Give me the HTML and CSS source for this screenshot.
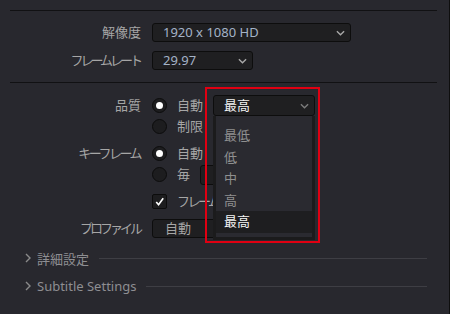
FILE: index.html
```html
<!DOCTYPE html>
<html lang="ja">
<head>
<meta charset="utf-8">
<link rel="stylesheet" href="styles.css">
</head>
<body>
<div class="panel">
  <div class="sep first"></div>
  <div class="row r-res">
    <div class="label">解像度</div>
    <div class="select wide"><span class="val blue">1920 x 1080 HD</span><svg class="chev" viewBox="0 0 10 6"><path d="M1 1l4 4 4-4" fill="none" stroke="#a9a9a9" stroke-width="1.5"/></svg></div>
  </div>
  <div class="row r-fps">
    <div class="label"><span class="kana k7">フレームレート</span></div>
    <div class="select fps"><span class="val blue">29.97</span><svg class="chev" viewBox="0 0 10 6"><path d="M1 1l4 4 4-4" fill="none" stroke="#a9a9a9" stroke-width="1.5"/></svg></div>
  </div>
  <div class="sep second"></div>

  <div class="group g-quality">
    <div class="label">品質</div>
    <div class="opts">
      <div class="opt"><span class="radio on"></span><span class="otext">自動</span>
        <div class="qwrap">
          <div class="select qsel"><span class="val white">最高</span><svg class="chev" viewBox="0 0 10 6"><path d="M1 1l4 4 4-4" fill="none" stroke="#7c7c7c" stroke-width="1.5"/></svg></div>
          <ul class="menu">
            <li>最低</li>
            <li>低</li>
            <li>中</li>
            <li>高</li>
            <li class="sel">最高</li>
          </ul>
          <div class="redbox"></div>
        </div>
      </div>
      <div class="opt"><span class="radio"></span><span class="otext">制限</span></div>
    </div>
  </div>

  <div class="group g-key">
    <div class="label"><span class="kana">キーフレーム</span></div>
    <div class="opts">
      <div class="opt"><span class="radio on"></span><span class="otext">自動</span></div>
      <div class="opt"><span class="radio"></span><span class="otext">毎</span><span class="numbox"></span></div>
    </div>
  </div>

  <div class="row r-check">
    <div class="label"></div>
    <div class="opt"><span class="check"><svg viewBox="0 0 14 14"><path d="M3.5 7.5l2.5 3 5-7" fill="none" stroke="#fff" stroke-width="1.8"/></svg></span><span class="otext kana">フレームの並べ替え</span></div>
  </div>

  <div class="row r-prof">
    <div class="label"><span class="kana k-prof">プロファイル</span></div>
    <div class="select prof"><span class="val">自動</span></div>
  </div>

  <div class="section s-detail">
    <svg class="arrow" viewBox="0 0 6 10"><path d="M1 1l4 4-4 4" fill="none" stroke="#8a8a8a" stroke-width="1.4"/></svg>
    <span class="stitle">詳細設定</span>
    <span class="sline"></span>
  </div>
  <div class="section s-sub">
    <svg class="arrow" viewBox="0 0 6 10"><path d="M1 1l4 4-4 4" fill="none" stroke="#8a8a8a" stroke-width="1.4"/></svg>
    <span class="stitle">Subtitle Settings</span>
    <span class="sline"></span>
  </div>
</div>
</body>
</html>
```
FILE: styles.css
```css
* { box-sizing: border-box; }
html, body { margin: 0; padding: 0; }
body {
  width: 450px;
  height: 314px;
  overflow: hidden;
  background: #28282e;
  font-family: "Noto Sans", "Noto Sans CJK JP", sans-serif;
  font-size: 13px;
  color: #a3a3a3;
}
.panel {
  width: 450px;
  height: 314px;
  border-right: 1px solid #0e0e0e;
  padding-top: 10px;
}
.sep {
  height: 1px;
  background: #111113;
  margin-left: 10px;
  width: 427px;
}
.row {
  display: flex;
  align-items: center;
}
.label {
  width: 141px;
  text-align: right;
  margin-right: 11px;
  flex: none;
  line-height: 19px;
  color: #a6a6a6;
}
.kana { letter-spacing: -2.5px; }
.k7 { letter-spacing: -3px; }
.k-prof { letter-spacing: -3px; }
.label .kana { margin-right: 1px; }
.select {
  height: 19px;
  background: #1f1f21;
  border: 1px solid #0d0d0d;
  border-radius: 3px;
  display: flex;
  align-items: center;
  padding-left: 10px;
  position: relative;
}
.val { line-height: 17px; }
.blue { color: #a4b3c7; }
.white { color: #f2f2f2; }
.chev {
  position: absolute;
  width: 9px;
  height: 6px;
  top: 6px;
}
.r-res { margin-top: 12px; }
.wide { width: 199px; }
.wide .chev { left: 183px; }
.r-fps { margin-top: 9px; }
.fps { width: 101px; }
.fps .chev { left: 85px; }
.second { margin-top: 12px; }

.group {
  display: flex;
  align-items: flex-start;
}
.group .label { line-height: 21px; }
.g-quality { margin-top: 12px; }
.g-key { margin-top: 6px; }
.opts { display: flex; flex-direction: column; }
.opt {
  display: flex;
  align-items: center;
  height: 21px;
  position: relative;
}
.radio {
  width: 15px;
  height: 15px;
  border-radius: 50%;
  background: #1d1d1f;
  border: 1px solid #0c0c0c;
  margin-right: 10px;
  flex: none;
  position: relative;
}
.radio.on::after {
  content: "";
  position: absolute;
  left: 3px;
  top: 3px;
  width: 7px;
  height: 7px;
  border-radius: 50%;
  background: #fff;
}
.otext { color: #a6a6a6; line-height: 21px; white-space: nowrap; }
.numbox {
  width: 60px;
  height: 20px;
  background: #1f1f21;
  border: 1px solid #0d0d0d;
  border-radius: 3px;
  margin-left: 10px;
}

.qwrap {
  position: absolute;
  left: 61px;
  top: 0;
}
.qsel {
  width: 102px;
  height: 21px;
  padding-left: 10px;
}
.qsel .chev { left: 86px; top: 7px; }
.menu {
  position: absolute;
  left: 0;
  top: 21px;
  width: 102px;
  margin: 0;
  padding: 9px 0 4px 0;
  list-style: none;
  background: #2a2a30;
  border: 3px solid #1b1b1c;
  border-top: 0;
  z-index: 2;
}
.menu li {
  color: #8f8f8f;
  height: 21.5px;
  line-height: 21.5px;
  padding-left: 8px;
}
.menu li.sel {
  background: #1e1e20;
  color: #f4f4f4;
}
.redbox {
  position: absolute;
  left: -8px;
  top: -8px;
  width: 115px;
  height: 156px;
  border: 2px solid #e00012;
  z-index: 3;
  pointer-events: none;
}

.r-check { margin-top: 6px; height: 21px; }
.check {
  width: 15px;
  height: 15px;
  background: #1d1d1f;
  border: 1px solid #0c0c0c;
  border-radius: 2px;
  margin-right: 10px;
  display: flex;
}
.check svg { width: 13px; height: 13px; }

.r-prof { margin-top: 7px; }
.prof { width: 101px; height: 19px; padding-left: 12px; }
.prof .val { color: #a6a6a6; }

.section {
  display: flex;
  align-items: center;
  margin-left: 25px;
  width: 402px;
  height: 18px;
}
.s-detail { margin-top: 11px; }
.s-sub { margin-top: 10px; }
.arrow { width: 6px; height: 10px; margin-right: 6px; flex: none; }
.stitle { color: #8e8e92; white-space: nowrap; }
.sline {
  flex: 1;
  height: 1px;
  background: #3e3e44;
  margin-left: 10px;
}
```
